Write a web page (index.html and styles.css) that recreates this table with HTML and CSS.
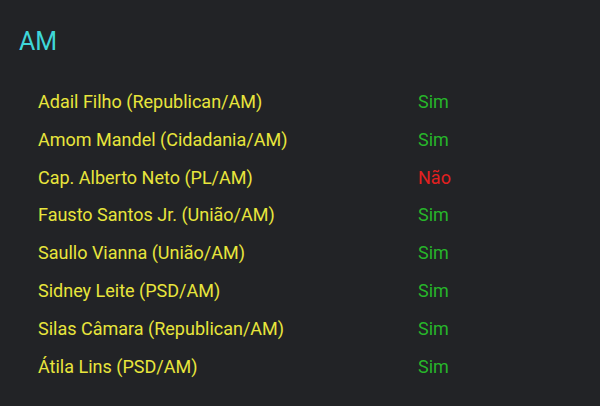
FILE: index.html
```html
<!DOCTYPE html>
<html lang="pt">
<head>
<meta charset="utf-8">
<link rel="stylesheet" href="styles.css">
</head>
<body>
<section class="state">
  <h2 class="state-title">AM</h2>
  <ul class="votes">
    <li class="vote"><span class="name">Adail Filho (Republican/AM)</span><span class="result yes">Sim</span></li>
    <li class="vote"><span class="name">Amom Mandel (Cidadania/AM)</span><span class="result yes">Sim</span></li>
    <li class="vote"><span class="name">Cap. Alberto Neto (PL/AM)</span><span class="result no">Não</span></li>
    <li class="vote"><span class="name">Fausto Santos Jr. (União/AM)</span><span class="result yes">Sim</span></li>
    <li class="vote"><span class="name">Saullo Vianna (União/AM)</span><span class="result yes">Sim</span></li>
    <li class="vote"><span class="name">Sidney Leite (PSD/AM)</span><span class="result yes">Sim</span></li>
    <li class="vote"><span class="name">Silas Câmara (Republican/AM)</span><span class="result yes">Sim</span></li>
    <li class="vote"><span class="name">Átila Lins (PSD/AM)</span><span class="result yes">Sim</span></li>
  </ul>
</section>
</body>
</html>
```
FILE: styles.css
```css
html, body {
  margin: 0;
  padding: 0;
  background: #222326;
  height: 100%;
}
body {
  font-family: Roboto, "Liberation Sans", sans-serif;
}
.state {
  padding: 26px 0 0 19px;
}
.state-title {
  margin: 0;
  font-size: 25px;
  font-weight: 400;
  line-height: 32px;
  color: #3fd6d8;
}
.votes {
  list-style: none;
  margin: 25px 0 0 0;
  padding: 0 0 0 19px;
}
.vote {
  display: grid;
  grid-template-columns: 380px auto;
  font-size: 18px;
  line-height: 37.8px;
  height: 37.8px;
}
.name {
  color: #e8e53c;
}
.result.yes {
  color: #27b52a;
}
.result.no {
  color: #e32020;
}
```
